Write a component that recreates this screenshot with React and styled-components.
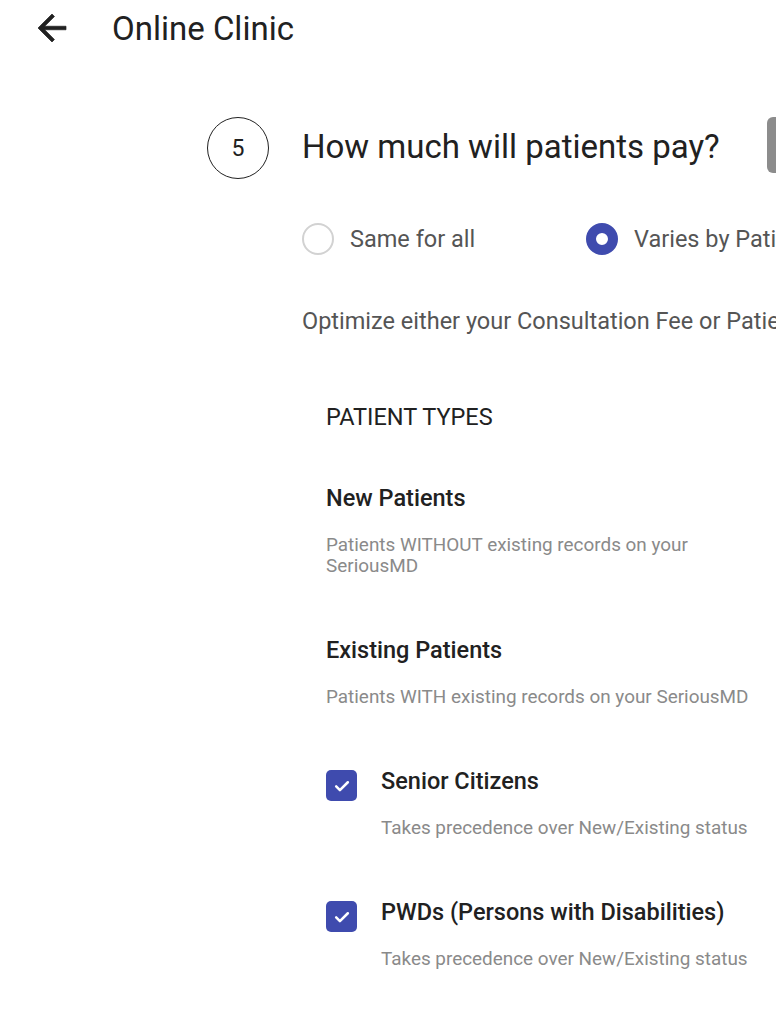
import styled, { createGlobalStyle } from "styled-components";

const GlobalStyle = createGlobalStyle`
  html, body {
    margin: 0;
    padding: 0;
    background: #ffffff;
    overflow: hidden;
  }
  body {
    font-family: Roboto, "Noto Sans", sans-serif;
    color: #212121;
  }
`

const Page = styled.div`
  width: 776px;
  height: 1024px;
  overflow: hidden;
`

const Header = styled.header`
  display: flex;
  align-items: center;
  height: 56px;
  padding-left: 31px;
`

const BackButton = styled.button`
  display: flex;
  align-items: center;
  justify-content: center;
  width: 42px;
  height: 42px;
  padding: 0;
  border: none;
  background: none;
  color: #212121;
  cursor: pointer;
`

const HeaderTitle = styled.h1`
  margin: 0 0 0 39px;
  font-size: 33px;
  font-weight: 400;
  color: #212121;
`

const Content = styled.main`
  padding-left: 207px;
  padding-top: 61px;
`

const StepRow = styled.div`
  display: flex;
  align-items: center;
  white-space: nowrap;
`

const StepNumber = styled.div`
  flex: none;
  width: 60px;
  height: 60px;
  border: 1.5px solid #212121;
  border-radius: 50%;
  display: flex;
  align-items: center;
  justify-content: center;
  font-size: 23px;
  color: #212121;
`

const StepTitle = styled.h2`
  margin: -4px 0 0 33px;
  font-size: 33px;
  font-weight: 400;
  color: #212121;
`

const SideButton = styled.div`
  flex: none;
  align-self: flex-start;
  margin-left: 47px;
  width: 120px;
  height: 56px;
  border-radius: 6px;
  background: #8c8c8c;
`

const StepBody = styled.div`
  padding-left: 95px;
`

const RadioGroup = styled.div`
  display: flex;
  align-items: center;
  margin-top: 44px;
  white-space: nowrap;
`

const RadioOption = styled.label`
  flex: none;
  display: flex;
  align-items: center;
  width: ${p => p.$width || "auto"};
  font-size: 23.5px;
  color: #555555;
`

const RadioCircle = styled.span`
  flex: none;
  box-sizing: border-box;
  width: 32px;
  height: 32px;
  margin-right: 16px;
  border-radius: 50%;
  border: ${p => p.$checked ? "10px solid #3f4bae" : "2.5px solid #d2d2d2"};
  background: #ffffff;
`

const Hint = styled.p`
  margin: 52px 0 0;
  font-size: 23.5px;
  line-height: 28px;
  color: #555555;
  white-space: nowrap;
`

const Types = styled.section`
  padding-left: 24px;
  margin-top: 68px;
`

const SectionLabel = styled.div`
  font-size: 23.5px;
  color: #212121;
  line-height: 28px;
`

const TypeItem = styled.div`
  display: flex;
  align-items: flex-start;
  margin-top: ${p => p.$gap}px;
`

const CheckBox = styled.span`
  flex: none;
  width: 31px;
  height: 31px;
  margin: 3px 24px 0 0;
  border-radius: 5px;
  background: #3f4bae;
  display: flex;
  align-items: center;
  justify-content: center;
`

const TypeText = styled.div`
  width: 440px;
`

const TypeTitle = styled.div`
  font-size: 23.5px;
  font-weight: 500;
  color: #212121;
  line-height: 28px;
`

const TypeDesc = styled.div`
  margin-top: 22px;
  font-size: 18.9px;
  line-height: 21px;
  color: #8a8a8a;
  max-width: 420px;
  white-space: ${p => p.$nowrap ? "nowrap" : "normal"};
`

const BackArrow = () => (
  <svg width="42" height="42" viewBox="0 0 24 24">
    <path d="M20 11H7.83l5.59-5.59L12 4l-8 8 8 8 1.41-1.41L7.83 13H20v-2z" fill="currentColor" stroke="currentColor" strokeWidth="0.4" strokeLinejoin="round"/>
  </svg>
)

const Check = () => (
  <svg width="20" height="20" viewBox="0 0 24 24">
    <path d="M5 12.5l4.5 4.5L19 7.5" fill="none" stroke="#ffffff" strokeWidth="3" strokeLinecap="round" strokeLinejoin="round"/>
  </svg>
)

const types = [
  { title: "New Patients", desc: "Patients WITHOUT existing records on your SeriousMD", gap: 53 },
  { title: "Existing Patients", desc: "Patients WITH existing records on your SeriousMD", gap: 60, nowrap: true },
  { title: "Senior Citizens", desc: "Takes precedence over New/Existing status", gap: 60, checked: true },
  { title: "PWDs (Persons with Disabilities)", desc: "Takes precedence over New/Existing status", gap: 60, checked: true },
]

export default function App() {
  return (
    <Page>
      <GlobalStyle/>
      <Header>
        <BackButton><BackArrow/></BackButton>
        <HeaderTitle>Online Clinic</HeaderTitle>
      </Header>
      <Content>
        <StepRow>
          <StepNumber>5</StepNumber>
          <StepTitle>How much will patients pay?</StepTitle>
          <SideButton/>
        </StepRow>
        <StepBody>
          <RadioGroup>
            <RadioOption $width="284px"><RadioCircle/>Same for all</RadioOption>
            <RadioOption><RadioCircle $checked/>Varies by Patient Type</RadioOption>
          </RadioGroup>
          <Hint>Optimize either your Consultation Fee or Patient Fee</Hint>
          <Types>
            <SectionLabel>PATIENT TYPES</SectionLabel>
            {types.map(t => (
              <TypeItem key={t.title} $gap={t.gap}>
                {t.checked && <CheckBox><Check/></CheckBox>}
                <TypeText>
                  <TypeTitle>{t.title}</TypeTitle>
                  <TypeDesc $nowrap={t.nowrap}>{t.desc}</TypeDesc>
                </TypeText>
              </TypeItem>
            ))}
          </Types>
        </StepBody>
      </Content>
    </Page>
  )
}
